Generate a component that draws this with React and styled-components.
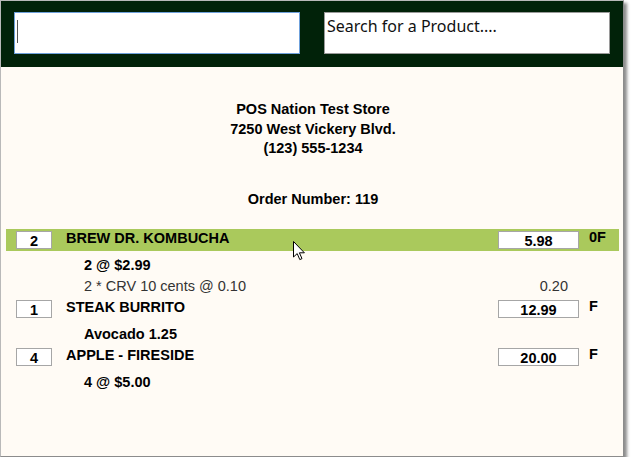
import styled, { createGlobalStyle } from 'styled-components';

const GlobalStyle = createGlobalStyle`
  html, body {
    margin: 0;
    padding: 0;
    background: #ffffff;
  }
  * {
    box-sizing: border-box;
  }
`;

const items = [
  {
    qty: 2,
    name: 'BREW DR. KOMBUCHA',
    price: '5.98',
    flag: '0F',
    selected: true,
    details: [
      { text: '2 @ $2.99', bold: true },
      { text: '2 * CRV 10 cents @ 0.10', amount: '0.20' },
    ],
  },
  {
    qty: 1,
    name: 'STEAK BURRITO',
    price: '12.99',
    flag: 'F',
    details: [{ text: 'Avocado 1.25', bold: true }],
  },
  {
    qty: 4,
    name: 'APPLE - FIRESIDE',
    price: '20.00',
    flag: 'F',
    details: [{ text: '4 @ $5.00', bold: true }],
  },
];

function App() {
  return (
    <>
      <GlobalStyle />
      <Window>
        <Header>
          <SearchField $focused>
            <Caret />
          </SearchField>
          <SearchField>Search for a Product....</SearchField>
        </Header>

        <Receipt>
          <StoreInfo>
            <div>POS Nation Test Store</div>
            <div>7250 West Vickery Blvd.</div>
            <div>(123) 555-1234</div>
          </StoreInfo>

          <OrderNumber>Order Number: 119</OrderNumber>

          <ItemList>
            {items.map((item) => (
              <Item key={item.name}>
                <ItemRow $selected={item.selected}>
                  <QtyBox>{item.qty}</QtyBox>
                  <ItemName>{item.name}</ItemName>
                  <PriceBox>{item.price}</PriceBox>
                  <Flag>{item.flag}</Flag>
                  {item.selected && (
                    <Pointer viewBox="0 0 13 20" width="13" height="20">
                      <path
                        d="M0.5 0.5 L0.5 16 L4.2 12.6 L6.8 18.6 L9 17.6 L6.4 11.8 L11.4 11.8 Z"
                        fill="#ffffff"
                        stroke="#000000"
                        strokeWidth="1"
                        strokeLinejoin="round"
                      />
                    </Pointer>
                  )}
                </ItemRow>
                <Details>
                  {item.details.map((d) => (
                    <DetailLine key={d.text} $bold={d.bold}>
                      <DetailText>{d.text}</DetailText>
                      <DetailAmount>{d.amount}</DetailAmount>
                    </DetailLine>
                  ))}
                </Details>
              </Item>
            ))}
          </ItemList>
        </Receipt>
      </Window>
    </>
  );
}

export default App;

const Window = styled.div`
  width: 624px;
  height: 457px;
  border: 1px solid #b9b9b9;
  border-right-color: #8c8c8c;
  border-bottom-color: #8c8c8c;
  background: #fffbf5;
  box-shadow: 3px 3px 3px rgba(0, 0, 0, 0.45);
  display: flex;
  flex-direction: column;
  overflow: hidden;
`;

const Header = styled.div`
  height: 66px;
  background: #012209;
  display: flex;
  gap: 24px;
  padding: 11px 12px 0 13px;
`;

const SearchField = styled.div`
  width: 286px;
  height: 42px;
  background: #ffffff;
  border: 1px solid ${(p) => (p.$focused ? '#6fa1dc' : '#9a9a9a')};
  font-family: 'Noto Sans', 'Open Sans', sans-serif;
  font-size: 16px;
  line-height: 20px;
  color: #111;
  padding: 3px 0 0 2px;
`;

const Caret = styled.span`
  display: block;
  width: 1px;
  height: 23px;
  margin: 4px 0 0 0;
  background: #555;
`;

const Receipt = styled.div`
  flex: 1;
  font-family: 'Liberation Sans', Arial, sans-serif;
  font-size: 14.5px;
  color: #000;
`;

const StoreInfo = styled.div`
  margin-top: 33px;
  text-align: center;
  font-weight: bold;
  line-height: 19.5px;
  padding-left: 2px;
`;

const OrderNumber = styled.div`
  margin-top: 31px;
  text-align: center;
  font-weight: bold;
  line-height: 19.5px;
  padding-left: 2px;
`;

const ItemList = styled.div`
  margin-top: 19.5px;
  padding: 0 4px 0 5px;
`;

const Item = styled.div``;

const columns = '10px 36px 14px 432px 81px 10px 1fr';

const ItemRow = styled.div`
  position: relative;
  height: 22px;
  display: grid;
  grid-template-columns: ${columns};
  align-items: start;
  background: ${(p) => (p.$selected ? '#aac95c' : 'transparent')};
  font-weight: bold;
`;

const QtyBox = styled.div`
  grid-column: 2;
  margin-top: 2px;
  height: 18px;
  background: #fff;
  border: 1px solid #a6a6a6;
  text-align: center;
  line-height: 16px;
  padding-top: 1px;
`;

const ItemName = styled.div`
  grid-column: 4;
  line-height: 18px;
`;

const PriceBox = styled.div`
  grid-column: 5;
  margin-top: 2px;
  height: 18px;
  background: #fff;
  border: 1px solid #a6a6a6;
  text-align: center;
  line-height: 16px;
  padding-top: 1px;
`;

const Flag = styled.div`
  grid-column: 7;
  line-height: 16px;
`;

const Pointer = styled.svg`
  position: absolute;
  left: 287px;
  top: 12px;
`;

const Details = styled.div`
  padding: 4px 0 1px;
`;

const DetailLine = styled.div`
  display: grid;
  grid-template-columns: 78px 414px 81px 1fr;
  height: 21px;
  line-height: 21px;
  font-weight: ${(p) => (p.$bold ? 'bold' : 'normal')};
  color: ${(p) => (p.$bold ? '#000' : '#333')};
`;

const DetailText = styled.div`
  grid-column: 2;
  white-space: nowrap;
`;

const DetailAmount = styled.div`
  grid-column: 3;
  text-align: right;
  padding-right: 11px;
`;
